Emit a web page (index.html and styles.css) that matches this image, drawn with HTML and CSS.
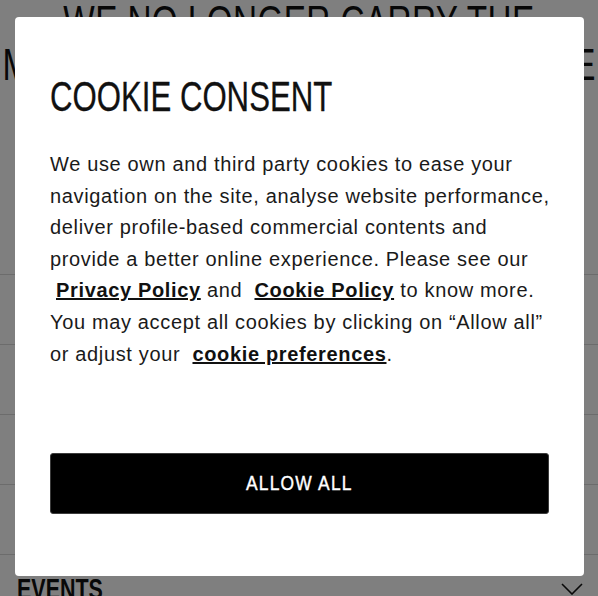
FILE: index.html
```html
<!DOCTYPE html>
<html lang="en">
<head>
<meta charset="utf-8">
<title>Cookie consent</title>
<link rel="stylesheet" href="styles.css">
</head>
<body>
<div class="page">
  <h1 class="page-title">
    <span class="title-line title-line-first">WE NO LONGER CARRY THE</span>
    <span class="title-line">MODEL YOU'RE LOOKING FOR HERE</span>
  </h1>
  <ul class="rows">
    <li class="row"><span class="row-label">STORES</span></li>
    <li class="row"><span class="row-label">SERVICES</span></li>
    <li class="row"><span class="row-label">NEWS</span></li>
    <li class="row"><span class="row-label">CAREERS</span></li>
    <li class="row"><span class="row-label">EVENTS</span>
      <svg class="chevron" width="22" height="12" viewBox="0 0 22 12"><path d="M1 1 L11 11 L21 1" fill="none" stroke="#111" stroke-width="1.6"/></svg>
    </li>
  </ul>
</div>

<div class="overlay">
  <div class="modal" role="dialog" aria-labelledby="cc-title">
    <h2 class="modal-title" id="cc-title"><span class="condensed">COOKIE CONSENT</span></h2>
    <p class="modal-text">We use own and third party cookies to ease your navigation on the site, analyse website performance, deliver profile-based commercial contents and provide a better online experience. Please see our <a class="link" href="#">Privacy Policy</a> and <a class="link" href="#">Cookie Policy</a> to know more. You may accept all cookies by clicking on “Allow all” or adjust your <a class="link" href="#">cookie preferences</a>.</p>
    <button class="btn-allow" type="button"><span class="btn-label">ALLOW ALL</span></button>
  </div>
</div>
</body>
</html>
```
FILE: styles.css
```css
html, body {
  margin: 0;
  padding: 0;
  background: #ffffff;
  overflow: hidden;
}
body {
  width: 598px;
  height: 596px;
  font-family: "Liberation Sans", Arial, sans-serif;
  color: #111;
}
.page {
  position: relative;
}
.page-title {
  margin: 0;
  font-family: "Liberation Sans", Arial, sans-serif;
  font-weight: normal;
  text-align: center;
  color: #111;
}
.title-line {
  display: block;
  white-space: nowrap;
  font-size: 33.3px;
  line-height: 43px;
  transform: scaleY(1.351);
}
.title-line-first {
  letter-spacing: 0.4px;
}
.rows {
  list-style: none;
  margin: 188px 0 0;
  padding: 0;
}
.row {
  height: 70px;
  box-sizing: border-box;
  border-top: 1px solid #d9d9d9;
  display: flex;
  align-items: flex-start;
  justify-content: space-between;
  padding: 17px 15px 0 17px;
}
.row-label {
  display: inline-block;
  font-weight: bold;
  font-size: 29px;
  line-height: 34px;
  color: #111;
  transform: scaleX(0.74);
  transform-origin: left center;
}
.chevron {
  margin-top: 11px;
}
.overlay {
  position: fixed;
  inset: 0;
  background: rgba(0, 0, 0, 0.5);
}
.modal {
  position: absolute;
  left: 15px;
  top: 17px;
  width: 569px;
  height: 559px;
  box-sizing: border-box;
  background: #fff;
  border-radius: 4px;
  padding: 59px 35px 62px;
  display: flex;
  flex-direction: column;
}
.modal-title {
  margin: 0;
  font-weight: normal;
  font-size: 42px;
  line-height: 42px;
  color: #111;
}
.condensed {
  display: inline-block;
  transform: scaleX(0.742);
  transform-origin: left center;
  -webkit-text-stroke: 0.3px #111;
}
.modal-text {
  margin: 31px -8px 0 0;
  font-size: 20px;
  line-height: 31.6px;
  letter-spacing: 0.65px;
  color: #1a1a1a;
}
.link {
  color: #111;
  font-weight: bold;
  text-decoration: underline;
  margin-left: 6px;
}
.btn-allow {
  margin-top: auto;
  height: 61px;
  width: 100%;
  background: #000;
  color: #fff;
  border: 1px solid #3c3c3c;
  border-radius: 3px;
  font-family: "Liberation Sans", Arial, sans-serif;
  font-size: 20px;
  cursor: pointer;
  padding: 0;
}
.btn-label {
  display: inline-block;
  letter-spacing: 1.4px;
  transform: scaleX(0.87);
  -webkit-text-stroke: 0.4px #fff;
}
```
